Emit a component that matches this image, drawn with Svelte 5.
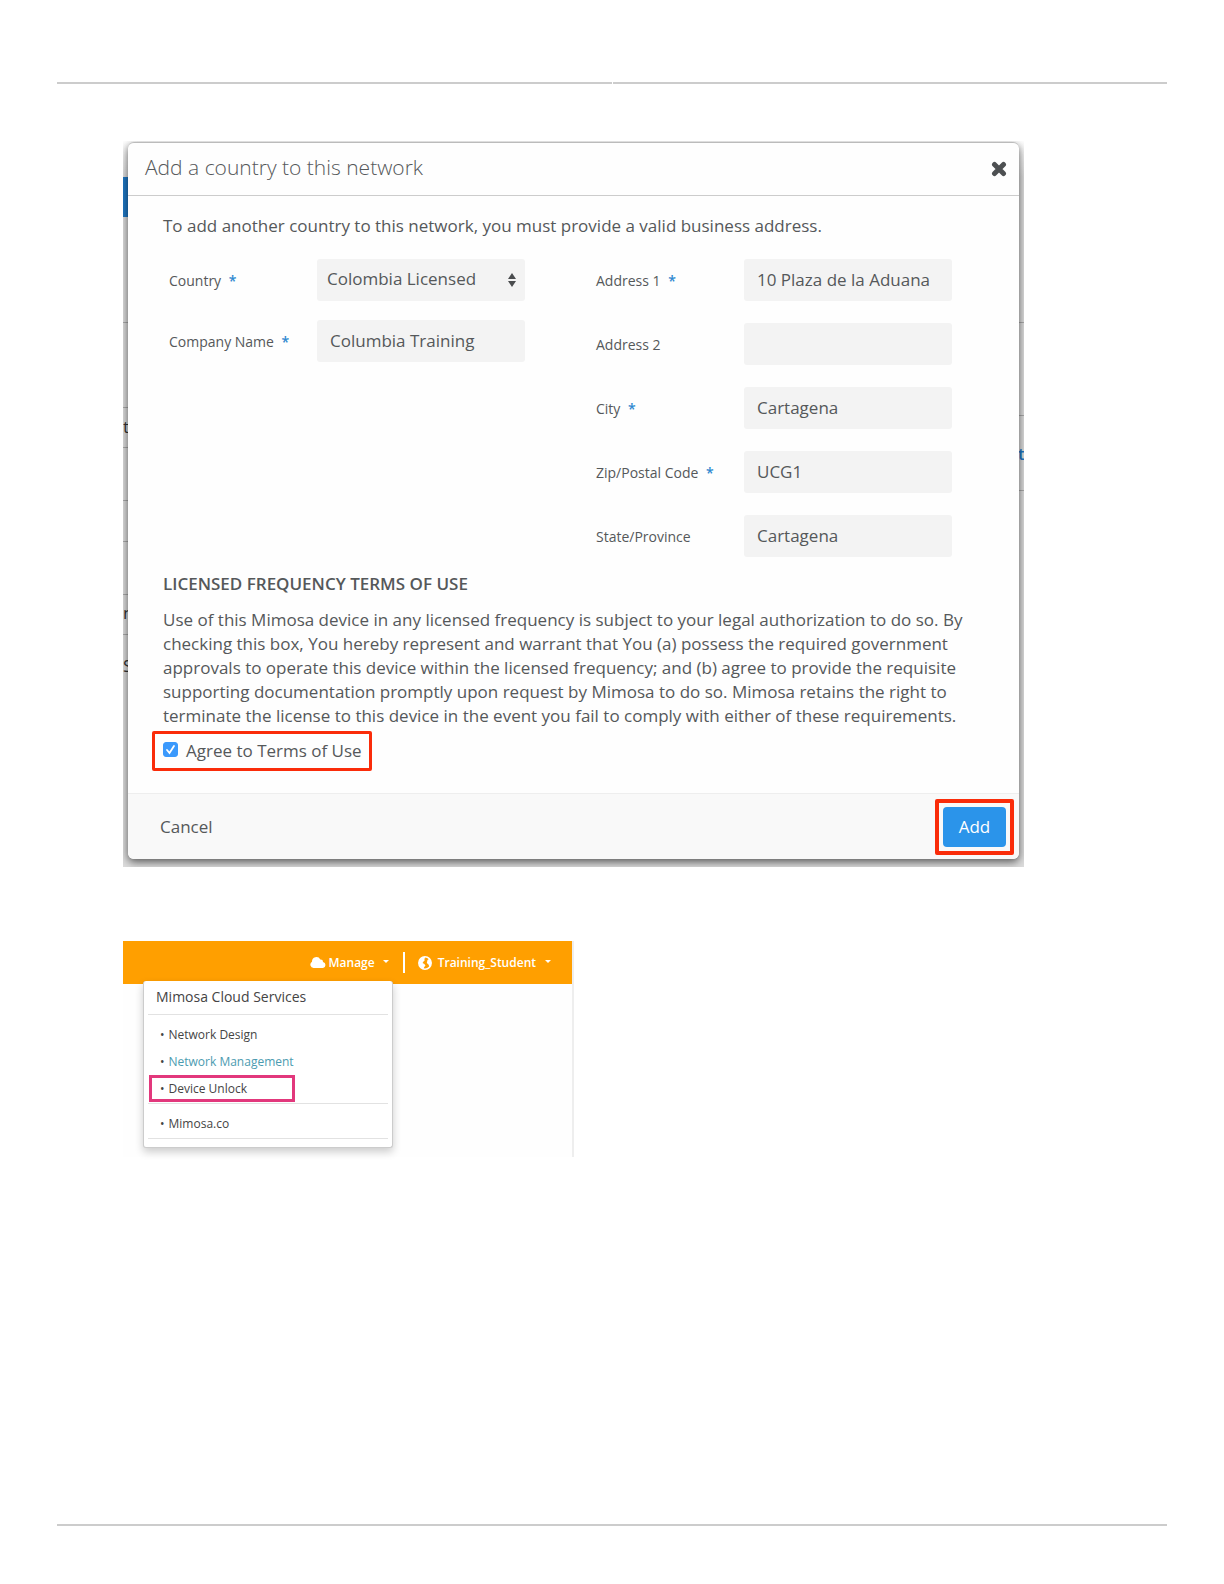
<script>
	let form = $state({
		country: 'Colombia Licensed',
		company: 'Columbia Training',
		address1: '10 Plaza de la Aduana',
		address2: '',
		city: 'Cartagena',
		zip: 'UCG1',
		state: 'Cartagena'
	});
	let agreed = $state(true);

	const addressFields = [
		{ key: 'address1', label: 'Address 1', required: true },
		{ key: 'address2', label: 'Address 2', required: false },
		{ key: 'city', label: 'City', required: true },
		{ key: 'zip', label: 'Zip/Postal Code', required: true },
		{ key: 'state', label: 'State/Province', required: false }
	];

	// slivers of the page that show on either side of the dialog
	const leftLines = [179, 264, 304, 357, 398, 451, 491];
	const leftGlyphs = [
		{ top: 274, text: 't' },
		{ top: 460, text: 'n' },
		{ top: 513, text: 'S' }
	];
	const rightLines = [179, 272, 347];
</script>

<div class="page">
	<header class="rules">
		<span></span>
		<span></span>
	</header>

	<main>
		<section class="shot">
			<div class="gutter left" aria-hidden="true">
				<i class="tab"></i>
				{#each leftLines as top}
					<i class="line" style="top: {top}px"></i>
				{/each}
				{#each leftGlyphs as g}
					<b style="top: {g.top}px">{g.text}</b>
				{/each}
			</div>
			<div class="gutter right" aria-hidden="true">
				{#each rightLines as top}
					<i class="line" style="top: {top}px"></i>
				{/each}
				<b class="link">t</b>
			</div>

			<form class="dialog" onsubmit={(e) => e.preventDefault()}>
				<div class="head">
					<h1>Add a country to this network</h1>
					<button type="button" class="close" aria-label="Close">
						<svg viewBox="0 0 16 16" width="16" height="16">
							<path
								d="M3.5 3.5l9 9M12.5 3.5l-9 9"
								stroke="#4d5052"
								stroke-width="5"
								stroke-linecap="round"
							/>
						</svg>
					</button>
				</div>

				<div class="body">
					<p class="intro">
						To add another country to this network, you must provide a valid business address.
					</p>

					<div class="columns">
						<div class="col main-col">
							<div class="field">
								<label for="country">Country <em>*</em></label>
								<div class="select">
									<select id="country" bind:value={form.country}>
										<option>Colombia Licensed</option>
									</select>
									<svg viewBox="0 0 8 14" width="8" height="14" aria-hidden="true">
										<path d="M4 0l4 6H0zM4 14l4-6H0z" fill="#4a4c4e" />
									</svg>
								</div>
							</div>
							<div class="field">
								<label for="company">Company Name <em>*</em></label>
								<input id="company" type="text" bind:value={form.company} />
							</div>
						</div>

						<div class="col address-col">
							{#each addressFields as { key, label, required }}
								<div class="field">
									<label for={key}>{label} {#if required}<em>*</em>{/if}</label>
									<input id={key} type="text" bind:value={form[key]} />
								</div>
							{/each}
						</div>
					</div>

					<h2>LICENSED FREQUENCY TERMS OF USE</h2>
					<p class="terms">
						Use of this Mimosa device in any licensed frequency is subject to your legal
						authorization to do so. By checking this box, You hereby represent and warrant that You
						(a) possess the required government approvals to operate this device within the licensed
						frequency; and (b) agree to provide the requisite supporting documentation promptly upon
						request by Mimosa to do so. Mimosa retains the right to terminate the license to this
						device in the event you fail to comply with either of these requirements.
					</p>

					<label class="agree">
						<span class="check">
							<input type="checkbox" bind:checked={agreed} />
							{#if agreed}
								<svg viewBox="0 0 15 15" width="15" height="15" aria-hidden="true">
									<path
										d="M4 8l2.500 3L11 4"
										fill="none"
										stroke="#fff"
										stroke-width="1.800"
										stroke-linecap="round"
									/>
								</svg>
							{/if}
						</span>
						<span>Agree to Terms of Use</span>
					</label>
				</div>

				<div class="foot">
					<button type="button" class="cancel">Cancel</button>
					<div class="callout">
						<button type="submit" class="add">Add</button>
					</div>
				</div>
			</form>
		</section>

		<section class="cloud">
			<nav class="bar">
				<button type="button">
					<svg viewBox="0 0 16 11" width="16" height="11" aria-hidden="true">
						<path
							d="M3.6 11A3.4 3.4 0 0 1 2 4.7 4.4 4.4 0 0 1 10.300 2.500 2.500 2.500 0 0 1 13 5.100 3 3 0 0 1 13 11z"
							fill="#fff"
						/>
					</svg>
					<span>Manage</span>
					<i class="caret"></i>
				</button>
				<span class="divider"></span>
				<button type="button" class="user">
					<svg viewBox="0 0 14 14" width="14" height="14" aria-hidden="true">
						<circle cx="7" cy="7" r="6.200" fill="#ff9f00" stroke="#fff" stroke-width="1.500" />
						<path
							d="M1 5C1.500 2.500 3.500 1 6.500 .8L7.500 2 6 3l1 1-1.500 1.500L4.500 7l1.500.8 1.500 1.500L6 11.500 5.500 13C3 12 1 10 1 7zM9.500 4l2-1.500L13.300 6l-.3 3-1.500 2-1-2.500L8.800 7z"
							fill="#fff"
						/>
					</svg>
					<span>Training_Student</span>
					<i class="caret"></i>
				</button>
			</nav>

			<div class="menu">
				<h3>Mimosa Cloud Services</h3>
				<ul>
					<li><a href="#design">Network Design</a></li>
					<li><a href="#management" class="active">Network Management</a></li>
					<li class="marked"><a href="#unlock">Device Unlock</a></li>
				</ul>
				<ul>
					<li><a href="#mimosa">Mimosa.co</a></li>
				</ul>
			</div>
		</section>
	</main>

	<footer></footer>
</div>

<style>
	:global(body) {
		margin: 0;
		background: #fff;
	}

	* {
		box-sizing: border-box;
	}

	.page {
		display: flex;
		flex-direction: column;
		min-height: 100vh;
		padding: 82px 57px 58px;
		font-family: 'Open Sans', 'Noto Sans', sans-serif;
		color: #55585a;
	}

	h1,
	h2,
	h3,
	p,
	ul {
		margin: 0;
		padding: 0;
	}

	button,
	input,
	select {
		font: inherit;
		color: inherit;
		border: 0;
	}
	button {
		padding: 0;
		background: none;
		cursor: pointer;
	}

	.rules {
		display: flex;
		gap: 1px;
	}
	.rules span {
		flex: 1;
		height: 2px;
		background: #ccc;
	}

	footer {
		height: 2px;
		background: #ccc;
	}

	main {
		flex: 1;
		padding: 57px 66px 0;
	}

	/* dialog */
	.shot {
		position: relative;
		max-width: 901px;
		padding: 1px 5px 8px;
		overflow: hidden;
		background: linear-gradient(#fff, #dcdcdc 36px, #dcdcdc);
	}

	.gutter {
		position: absolute;
		top: 2px;
		bottom: 0;
		width: 8px;
		overflow: hidden;
	}
	.left {
		left: 0;
	}
	.right {
		right: 0;
	}
	.gutter .tab {
		position: absolute;
		top: 34px;
		width: 8px;
		height: 40px;
		background: #1f78c4;
	}
	.gutter .line {
		position: absolute;
		width: 8px;
		height: 1px;
		background: #aaa;
	}
	.gutter b {
		position: absolute;
		left: 0;
		font-size: 17px;
		line-height: 20px;
		font-weight: 400;
		color: #333;
	}
	.gutter .link {
		top: 301px;
		left: 2px;
		font-weight: 600;
		color: #1f78c4;
	}

	.dialog {
		position: relative;
		border-radius: 6px;
		border-top: 1px solid #bbb;
		background: #fefefe;
		box-shadow: 0 3px 8px rgba(0, 0, 0, 0.6);
		font-size: 17px;
		line-height: 24px;
	}

	.head {
		display: flex;
		align-items: center;
		justify-content: space-between;
		height: 53px;
		padding: 0 12px 0 17px;
		border-bottom: 1px solid #ccc;
	}
	.head h1 {
		padding-bottom: 4px;
		font-size: 21px;
		font-weight: 300;
	}
	.close {
		display: flex;
	}

	.body {
		padding: 18px 35px 22px;
	}

	.columns {
		display: flex;
		justify-content: space-between;
		padding: 21px 32px 0 6px;
	}
	.col {
		display: flex;
		flex-direction: column;
	}
	.main-col {
		gap: 19px;
	}
	.address-col {
		gap: 22px;
	}
	.field {
		display: flex;
		align-items: center;
	}
	.field label {
		width: 148px;
		padding-top: 2px;
		font-size: 14px;
	}
	.field em {
		margin-left: 4px;
		font-style: normal;
		font-weight: 600;
		color: #2f88d0;
	}
	.field input,
	.field select {
		width: 208px;
		height: 42px;
		padding: 0 13px 2px;
		border-radius: 3px;
		background: #f3f3f3;
	}
	.field select {
		appearance: none;
		padding: 0 10px 2px;
	}
	.select {
		position: relative;
	}
	.select svg {
		position: absolute;
		top: 14px;
		right: 9px;
		pointer-events: none;
	}

	h2 {
		margin-top: 15px;
		font-size: 17px;
		font-weight: 600;
	}
	.terms {
		margin-top: 12px;
	}

	.agree {
		display: inline-flex;
		align-items: center;
		gap: 8px;
		height: 40px;
		margin: 3px 0 0 -11px;
		padding: 0 7px 0 8px;
		border: 3px solid #fa2c0a;
		border-radius: 2px;
	}
	.check {
		position: relative;
		display: flex;
		padding-bottom: 3px;
	}
	.check input {
		appearance: none;
		width: 15px;
		height: 15px;
		margin: 0;
		border: 1px solid #aaa;
		border-radius: 3px;
	}
	.check input:checked {
		border-color: #3b99fc;
		background: #3b99fc;
	}
	.check svg {
		position: absolute;
		top: 0;
		left: 0;
		pointer-events: none;
	}

	.foot {
		display: flex;
		align-items: center;
		justify-content: space-between;
		height: 66px;
		padding: 0 5px 0 32px;
		border-top: 1px solid #eee;
		border-radius: 0 0 6px 6px;
		background: #f9f9f9;
	}
	.callout {
		padding: 4px;
		border: 4px solid #fa2c0a;
		border-radius: 2px;
	}
	.add {
		display: block;
		width: 63px;
		height: 40px;
		border-radius: 4px;
		background: #2b94ea;
		color: #fff;
	}

	/* cloud services */
	.cloud {
		max-width: 451px;
		height: 216px;
		margin-top: 74px;
		border-right: 2px solid #eee;
		background: #fefefe;
		font-size: 12px;
		line-height: 18px;
	}
	.bar {
		display: flex;
		align-items: center;
		justify-content: flex-end;
		height: 43px;
		padding-right: 20px;
		background: #ff9f00;
		color: #fff;
		font-weight: 600;
	}
	.bar button {
		display: flex;
		align-items: center;
		gap: 3px;
	}
	.bar .user {
		gap: 6px;
	}
	.caret {
		margin: 0 1px 2px 5px;
		border: 3px solid transparent;
		border-top-color: #fff;
		border-bottom: 0;
	}
	.user .caret {
		margin-left: 3px;
	}
	.divider {
		width: 2px;
		height: 21px;
		margin: 0 13px;
		background: #fff;
	}

	.menu {
		position: relative;
		width: 250px;
		margin: -3px 0 0 20px;
		padding: 4px 4px 8px;
		border: 1px solid #ccc;
		border-top: 0;
		border-radius: 3px;
		background: #fff;
		box-shadow: 0 4px 8px rgba(0, 0, 0, 0.2);
		color: #444;
	}
	.menu h3 {
		padding: 0 8px 5px;
		border-bottom: 1px solid #e2e2e2;
		font-size: 14px;
		line-height: 24px;
		font-weight: 400;
	}
	.menu ul {
		padding: 6px 0 1px 1px;
		border-bottom: 1px solid #e2e2e2;
		list-style: none;
	}
	.menu li {
		display: flex;
		align-items: center;
		gap: 4px;
		width: 146px;
		padding-left: 8px;
		border: 3px solid transparent;
		line-height: 21px;
	}
	.menu li::before {
		content: '•';
	}
	.menu li.marked {
		border-color: #e2387c;
	}
	.menu a {
		color: inherit;
		text-decoration: none;
		white-space: nowrap;
	}
	.menu a.active {
		color: #4b9bb0;
	}
</style>
